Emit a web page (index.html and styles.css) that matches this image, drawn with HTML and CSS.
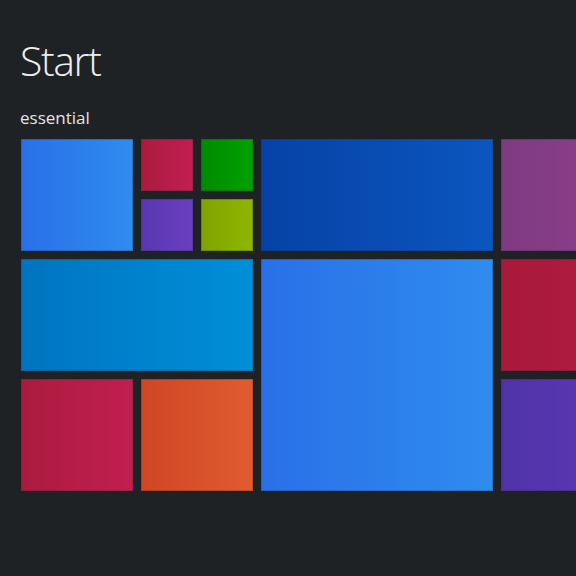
FILE: index.html
```html
<!DOCTYPE html>
<html>
<head>
<meta charset="utf-8">
<link rel="stylesheet" href="styles.css">
</head>
<body>
<div class="screen">
  <h1 class="title">Start</h1>
  <h2 class="group">essential</h2>
  <div class="grid">
    <div class="tile t-blue m" style="grid-column:1/3;grid-row:1/3"></div>
    <div class="tile t-red" style="grid-column:3;grid-row:1"></div>
    <div class="tile t-green" style="grid-column:4;grid-row:1"></div>
    <div class="tile t-purple" style="grid-column:3;grid-row:2"></div>
    <div class="tile t-lime" style="grid-column:4;grid-row:2"></div>
    <div class="tile t-navy" style="grid-column:5/9;grid-row:1/3"></div>
    <div class="tile t-magenta" style="grid-column:9/13;grid-row:1/3"></div>
    <div class="tile t-cyan" style="grid-column:1/5;grid-row:3/5"></div>
    <div class="tile t-blue" style="grid-column:5/9;grid-row:3/7"></div>
    <div class="tile t-crimson" style="grid-column:9/13;grid-row:3/5"></div>
    <div class="tile t-red" style="grid-column:1/3;grid-row:5/7"></div>
    <div class="tile t-orange" style="grid-column:3/5;grid-row:5/7"></div>
    <div class="tile t-violet" style="grid-column:9/13;grid-row:5/7"></div>
  </div>
</div>
</body>
</html>
```
FILE: styles.css
```css
html, body {
  margin: 0;
  padding: 0;
  background: #1f2224;
  width: 576px;
  height: 576px;
  overflow: hidden;
}
.screen {
  width: 555px;
  height: 540px;
  overflow: hidden;
  padding: 36px 0 0 21px;
  font-family: "Open Sans", "Noto Sans", sans-serif;
  color: #eeeeee;
}
.title {
  margin: 0 0 0 -1px;
  font-weight: 300;
  font-size: 41px;
  line-height: 48px;
  letter-spacing: -1.4px;
}
.group {
  margin: 24px 0 0 -1px;
  font-weight: 400;
  font-size: 17px;
  line-height: 20px;
  color: #e4e4e4;
}
.grid {
  margin-top: 11px;
  display: grid;
  grid-template-columns: repeat(12, 52px);
  grid-template-rows: repeat(6, 52px);
  gap: 8px;
  width: 712px;
}
.tile {
  box-shadow: inset 0 0 0 1px rgba(40, 40, 50, 0.25);
}
.t-blue { background: linear-gradient(90deg, #2970e8, #2f8cee); }
.t-red { background: linear-gradient(90deg, #ab1b3e, #c11f50); }
.t-green { background: linear-gradient(90deg, #008a00, #00a200); }
.t-purple { background: linear-gradient(90deg, #5838b0, #6a3fc0); }
.t-lime { background: linear-gradient(90deg, #7ea400, #90b600); }
.t-navy { background: linear-gradient(90deg, #0642a6, #0b56bf); }
.t-magenta { background: linear-gradient(90deg, #7e3a80, #9a4796); }
.t-cyan { background: linear-gradient(90deg, #0074bf, #008fd8); }
.t-crimson { background: linear-gradient(90deg, #a8193a, #b81f46); }
.t-orange { background: linear-gradient(90deg, #cf4624, #e05c30); }
.t-violet { background: linear-gradient(90deg, #4f33a8, #6c3dc2); }
```
